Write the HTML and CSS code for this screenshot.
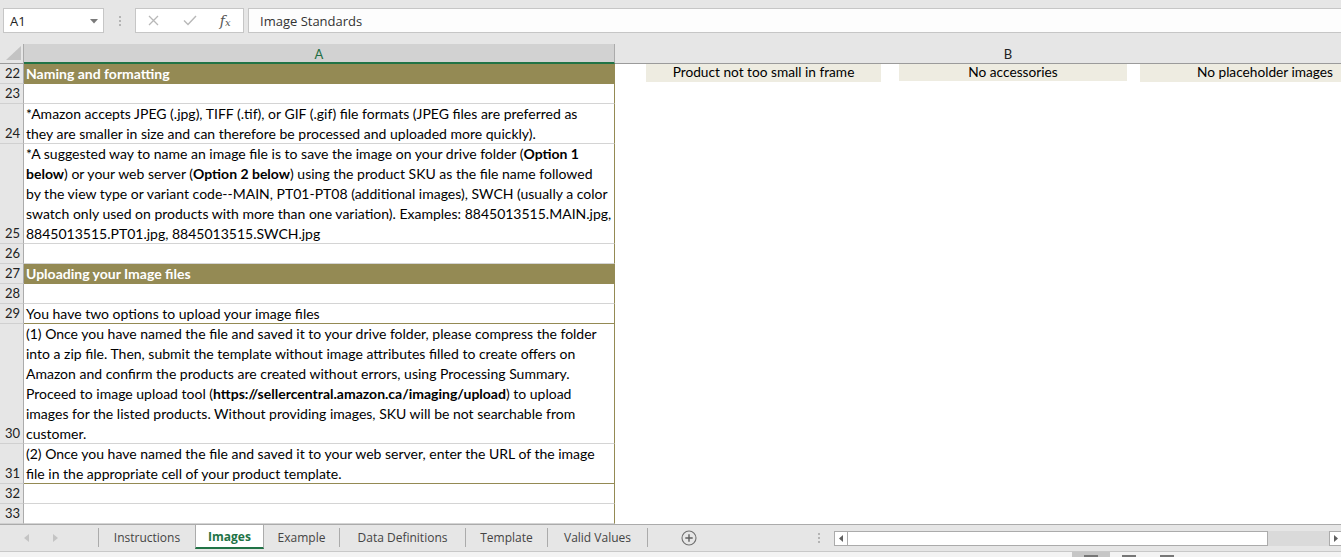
FILE: index.html
```html
<!DOCTYPE html>
<html>
<head>
<meta charset="utf-8">
<link rel="stylesheet" href="styles.css">
</head>
<body>
<div class="app">
  <div class="fbar">
    <div class="namebox"><span>A1</span><svg class="caret" width="8" height="5" viewBox="0 0 8 5"><path d="M0 0H8L4 4.5Z" fill="#7a7a7a"/></svg></div>
    <div class="fdots"><i></i><i></i><i></i></div>
    <div class="fbtns">
      <span class="fb"><svg width="11" height="11" viewBox="0 0 11 11"><path d="M1 1L10 10M10 1L1 10" stroke="#b8b8b8" stroke-width="1.3"/></svg></span>
      <span class="fb"><svg width="14" height="11" viewBox="0 0 14 11"><path d="M1 5.5L5 9.5L13 1" stroke="#b8b8b8" stroke-width="1.4" fill="none"/></svg></span>
      <span class="fb fx"><i>f<small>x</small></i></span>
    </div>
    <div class="finput">Image Standards</div>
  </div>

  <div class="sheet">
    <div class="corner"><svg width="18" height="16" viewBox="0 0 18 16"><path d="M17 1V15H2Z" fill="#c3c3c3"/></svg></div>
    <div class="colhdr a">A</div>
    <div class="colhdr b">B</div>

    <div class="rh">22</div>
    <div class="ca head"><p>Naming and formatting</p></div>
    <div class="cb shapes">
      <div class="shape s1">Product not too small in frame</div>
      <div class="shape s2">No accessories</div>
      <div class="shape s3">No placeholder images</div>
    </div>

    <div class="rh">23</div><div class="ca"><p></p></div><div class="cb"></div>

    <div class="rh">24</div>
    <div class="ca"><p>*Amazon accepts JPEG (.jpg), TIFF (.tif), or GIF (.gif) file formats (JPEG files are preferred as<br>they are smaller in size and can therefore be processed and uploaded more quickly).</p></div>
    <div class="cb"></div>

    <div class="rh">25</div>
    <div class="ca"><p>*A suggested way to name an image file is to save the image on your drive folder (<b>Option 1</b><br><b>below</b>) or your web server (<b>Option 2 below</b>) using the product SKU as the file name followed<br>by the view type or variant code--MAIN, PT01-PT08 (additional images), SWCH (usually a color<br>swatch only used on products with more than one variation). Examples: 8845013515.MAIN.jpg,<br>8845013515.PT01.jpg, 8845013515.SWCH.jpg</p></div>
    <div class="cb"></div>

    <div class="rh">26</div><div class="ca"><p></p></div><div class="cb"></div>

    <div class="rh">27</div>
    <div class="ca head"><p>Uploading your Image files</p></div>
    <div class="cb"></div>

    <div class="rh">28</div><div class="ca"><p></p></div><div class="cb"></div>

    <div class="rh">29</div>
    <div class="ca ob"><p>You have two options to upload your image files</p></div>
    <div class="cb"></div>

    <div class="rh">30</div>
    <div class="ca"><p>(1) Once you have named the file and saved it to your drive folder, please compress the folder<br>into a zip file. Then, submit the template without image attributes filled to create offers on<br>Amazon and confirm the products are created without errors, using Processing Summary.<br>Proceed to image upload tool (<b>https://sellercentral.amazon.ca/imaging/upload</b>) to upload<br>images for the listed products. Without providing images, SKU will be not searchable from<br>customer.</p></div>
    <div class="cb"></div>

    <div class="rh">31</div>
    <div class="ca ob"><p>(2) Once you have named the file and saved it to your web server, enter the URL of the image<br>file in the appropriate cell of your product template.</p></div>
    <div class="cb"></div>

    <div class="rh">32</div><div class="ca"><p></p></div><div class="cb"></div>
    <div class="rh">33</div><div class="ca"><p></p></div><div class="cb"></div>
  </div>

  <div class="tabbar">
    <div class="nav">
      <svg width="6" height="8" viewBox="0 0 6 8"><path d="M5 0V8L0 4Z" fill="#c4c4c4"/></svg>
      <svg width="6" height="8" viewBox="0 0 6 8"><path d="M1 0V8L6 4Z" fill="#c4c4c4"/></svg>
    </div>
    <div class="sep"></div>
    <div class="tab t-ins">Instructions</div>
    <div class="tab active">Images</div>
    <div class="tab t-ex">Example</div>
    <div class="sep"></div>
    <div class="tab t-dd">Data Definitions</div>
    <div class="sep"></div>
    <div class="tab t-tp">Template</div>
    <div class="sep"></div>
    <div class="tab t-vv">Valid Values</div>
    <div class="sep"></div>
    <div class="addsheet"><svg width="16" height="16" viewBox="0 0 16 16"><circle cx="8" cy="8" r="7" fill="none" stroke="#707070" stroke-width="1.1"/><path d="M8 4.3V11.7M4.3 8H11.7" stroke="#606060" stroke-width="1.4"/></svg></div>
    <div class="vdots"><i></i><i></i><i></i></div>
    <div class="hscroll">
      <div class="sbtn"><svg width="4" height="7" viewBox="0 0 4 7"><path d="M4 0V7L0 3.5Z" fill="#606060"/></svg></div>
      <div class="thumb"></div>
      <div class="track"></div>
      <div class="sbtn"><svg width="4" height="7" viewBox="0 0 4 7"><path d="M0 0V7L4 3.5Z" fill="#606060"/></svg></div>
    </div>
  </div>
  <div class="status">
    <div class="vbtn on"><i></i></div>
    <div class="vbtn"><i></i></div>
    <div class="vbtn"><i></i></div>
  </div>
</div>
</body>
</html>
```

FILE: styles.css
```css
* { box-sizing: border-box; margin: 0; padding: 0; }
html, body { width: 1341px; height: 557px; overflow: hidden; background: #fff; }
body { font-family: "Open Sans", "Liberation Sans", sans-serif; color: #222; }

.app { width: 1341px; height: 557px; display: flex; flex-direction: column; overflow: hidden; }

/* formula bar */
.fbar { height: 44px; flex: none; background: #e6e6e6; display: flex; align-items: flex-start; padding: 8px 0 0 3px; }
.namebox { width: 101px; height: 25px; flex: none; background: #fff; border: 1px solid #c6c6c6; display: flex; align-items: center; justify-content: space-between; padding: 1px 5px 0 6px; font-size: 13px; color: #222; }
.fdots { width: 31px; height: 25px; flex: none; display: flex; flex-direction: column; align-items: center; justify-content: center; gap: 2px; }
.fdots i, .vdots i { display: block; width: 2px; height: 2px; background: #b4b4b4; }
.fbtns { width: 109px; height: 25px; flex: none; background: #fff; border: 1px solid #c6c6c6; display: flex; align-items: center; }
.fb { width: 36px; display: flex; justify-content: center; align-items: center; }
.fx i { font-family: "DejaVu Serif", "Liberation Serif", serif; font-style: italic; font-size: 14px; color: #555; }
.fx small { font-size: 10px; }
.finput { flex: 1; height: 25px; margin-left: 4px; background: #fdfdfd; border: 1px solid #c6c6c6; border-right: none; padding-left: 11px; font-size: 13px; line-height: 24px; color: #333; }

/* sheet grid */
.sheet { flex: none; width: 1401px; height: 480px; display: grid; grid-template-columns: 24px 591px 786px;
  grid-template-rows: 20px 20px 20px 40px 100px 20px 20px 20px 20px 120px 40px 20px 20px; overflow: hidden; }
.corner { background: #e6e6e6; border-right: 1px solid #ababab; border-bottom: 1px solid #9b9b9b; display: flex; align-items: flex-end; justify-content: flex-end; padding: 0 1px 2px 0; }
.colhdr { background: #e6e6e6; border-bottom: 1px solid #9b9b9b; text-align: center; font-family: Lato, "Open Sans", sans-serif; font-size: 13px; line-height: 20px; color: #222; }
.colhdr.a { background: #d2d2d2; color: #1f6e43; border-right: 1px solid #ababab; border-bottom: 2px solid #217346; }

.rh { background: #e6e6e6; border-right: 1px solid #ababab; border-bottom: 1px solid #d0d0d0; font-family: Lato, "Open Sans", sans-serif; font-size: 13px; line-height: 19px; color: #222; display: flex; align-items: flex-end; justify-content: flex-end; padding-right: 3px; }

.ca { border-right: 1px solid #948a54; border-bottom: 1px solid #d4d4d4; display: flex; flex-direction: column; justify-content: flex-end; padding-left: 2px; font-family: Lato, "Open Sans", sans-serif; font-size: 14px; line-height: 20px; color: #000; white-space: nowrap; overflow: hidden; }
.ca p { margin-bottom: -1px; }
.ca.head { background: #948a54; color: #fff; font-weight: bold; border-bottom-color: #948a54; }
.ca.ob { border-bottom-color: #948a54; }

.cb { background: #fff; }
.shapes { display: flex; align-items: flex-start; padding-left: 31px; }
.shape { background: #eeece1; font-family: Lato, "Open Sans", sans-serif; font-size: 13.7px; color: #000; text-align: center; white-space: nowrap; flex: none; }
.s1 { width: 235px; height: 18px; line-height: 16px; }
.s2 { width: 228px; height: 17px; line-height: 15px; margin-left: 18px; }
.s3 { width: 250px; height: 18px; line-height: 15px; margin-left: 13px; }

/* tab bar */
.tabbar { flex: none; height: 28px; background: #e6e6e6; border-top: 1px solid #ababab; border-bottom: 1px solid #c8c8c8; display: flex; align-items: flex-start; font-size: 12px; color: #444; overflow: hidden; }
.tabbar > * { flex: none; }
.nav { width: 98px; height: 25px; display: flex; align-items: center; padding-left: 24px; gap: 22px; }
.sep { width: 1px; height: 19px; margin-top: 3px; background: #ababab; }
.tab { height: 25px; line-height: 26px; text-align: center; white-space: nowrap; }
.t-ins { width: 96px; }
.tab.active { width: 69px; margin-top: -1px; height: 25px; background: #fff; border-left: 1px solid #ababab; border-right: 1px solid #ababab; border-bottom: 2px solid #217346; color: #217346; font-weight: bold; line-height: 26px; }
.t-ex { width: 75px; }
.t-dd { width: 125px; }
.t-tp { width: 81px; }
.t-vv { width: 99px; }
.addsheet { margin-left: 33px; height: 25px; display: flex; align-items: center; padding-top: 1px; }
.vdots { margin-left: 120px; height: 25px; width: 4px; display: flex; flex-direction: column; align-items: center; justify-content: center; gap: 2px; }
.hscroll { margin-left: 13px; margin-top: 6px; height: 15px; display: flex; width: 510px; }
.sbtn { width: 14px; height: 15px; border: 1px solid #ababab; background: #fff; display: flex; align-items: center; justify-content: center; flex: none; }
.thumb { width: 420px; height: 15px; border: 1px solid #ababab; border-left: none; background: #fff; flex: none; }
.track { width: 61px; height: 15px; background: #dadada; flex: none; }

/* status bar */
.status { flex: 1; background: #f3f3f3; display: flex; padding-left: 1072px; }
.vbtn { width: 38px; display: flex; justify-content: center; padding-top: 3px; }
.vbtn.on { background: #c6c6c6; }
.vbtn i { display: block; width: 14px; height: 3px; background: #777; }
```
